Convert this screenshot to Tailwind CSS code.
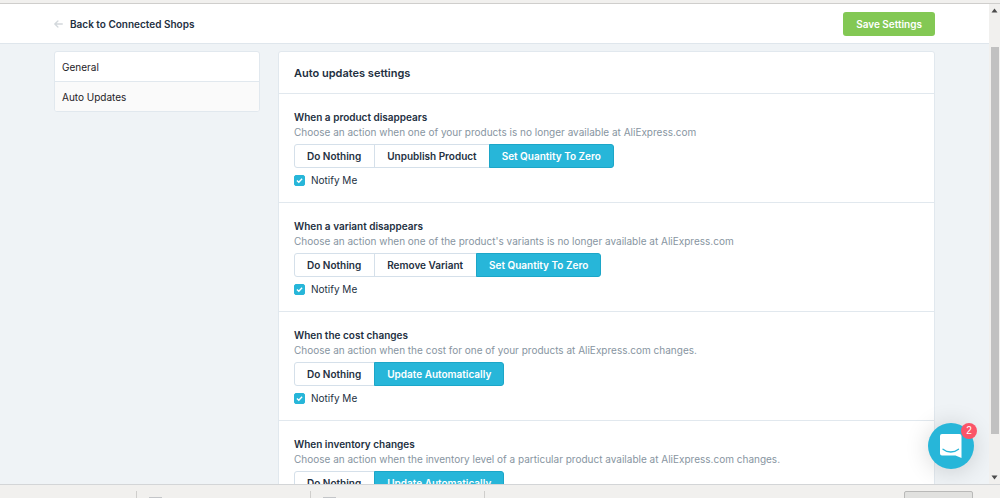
<!DOCTYPE html>
<html lang="en">
<head>
<meta charset="utf-8">
<meta name="viewport" content="width=device-width, initial-scale=1">
<title>Auto updates settings</title>
<script src="https://cdn.jsdelivr.net/npm/@tailwindcss/browser@4"></script>
</head>
<body class="flex h-screen flex-col overflow-hidden bg-[#f1f0ee] font-['Inter','Liberation_Sans',sans-serif] text-[10px] leading-[15px] text-[#23303f]">
  <div class="h-1 shrink-0 border-b border-[#cfcecc]"></div>
  <div class="flex min-h-0 flex-1 bg-[#eff3f6]">
    <div class="relative flex min-w-0 flex-1 flex-col overflow-hidden">
      <header class="h-10 shrink-0 border-b border-[#dfe6ec] bg-white">
        <div class="mx-auto flex h-full max-w-[881px] items-center justify-between">
          <a href="#" class="flex items-center gap-[7px] pt-px font-semibold">
            <svg class="h-2 w-[9px]" viewBox="0 0 9 8" fill="none" stroke="#d3d8dc" stroke-width="1.300" stroke-linecap="round" stroke-linejoin="round"><path d="M8.300 4H.9M3.900 1 .8 4l3.100 3"/></svg>
            Back to Connected Shops
          </a>
          <button type="button" class="h-6 rounded-[3px] bg-[#83c854] px-[13px] pt-px font-semibold text-white">Save Settings</button>
        </div>
      </header>
      <div class="mx-auto flex min-h-0 w-full max-w-[881px] flex-1 items-start gap-[18px] pt-[7px]">
        <nav class="w-[206px] shrink-0 overflow-hidden rounded-[3px] border border-[#e1e8ee] bg-white text-[#1d2126]">
          <a href="#" class="block border-b border-[#e1e8ee] px-[7px] pt-2 pb-[6px]">General</a>
          <a href="#" class="block bg-[#fafafa] px-[7px] pt-2 pb-[6px]">Auto Updates</a>
        </nav>
        <main class="min-w-0 flex-1 rounded-[3px] border border-[#e1e8ee] bg-white">
          <h1 class="border-b border-[#e1e8ee] px-[15px] pt-[13px] pb-[11px] text-[11px] leading-[17px] font-semibold">Auto updates settings</h1>

          <section class="border-b border-[#e1e8ee] px-[15px] pt-4 pb-[14px]">
            <h2 class="font-semibold">When a product disappears</h2>
            <p class="text-[#8795a1]">Choose an action when one of your products is no longer available at AliExpress.com</p>
            <div class="mt-1 flex h-6 font-semibold">
              <button type="button" class="rounded-l-[3px] border border-[#d5e0ea] pr-[13px] pl-3">Do Nothing</button>
              <button type="button" class="-ml-px border border-[#d5e0ea] px-3">Unpublish Product</button>
              <button type="button" class="-ml-px rounded-r-[3px] border border-[#1ca6c8] bg-[#27b6d9] px-3 text-white">Set Quantity To Zero</button>
            </div>
            <label class="mt-1 flex h-4 w-fit items-center gap-[6px]">
              <span class="grid h-[11px] w-[11px]">
                <input type="checkbox" checked class="col-start-1 row-start-1 h-[11px] w-[11px] appearance-none rounded-[2px] border border-[#c5d0da] checked:border-[#27b6d9] checked:bg-[#27b6d9]">
                <svg class="pointer-events-none col-start-1 row-start-1 h-[11px] w-[11px]" viewBox="0 0 11 11" fill="none" stroke="#fff" stroke-width="1.400"><path d="m2.900 5.400 1.900 1.800 3.300-3.400"/></svg>
              </span>
              Notify Me
            </label>
          </section>

          <section class="border-b border-[#e1e8ee] px-[15px] pt-4 pb-[14px]">
            <h2 class="font-semibold">When a variant disappears</h2>
            <p class="text-[#8795a1]">Choose an action when one of the product's variants is no longer available at AliExpress.com</p>
            <div class="mt-1 flex h-6 font-semibold">
              <button type="button" class="rounded-l-[3px] border border-[#d5e0ea] pr-[13px] pl-3">Do Nothing</button>
              <button type="button" class="-ml-px border border-[#d5e0ea] pr-[13px] pl-3">Remove Variant</button>
              <button type="button" class="-ml-px rounded-r-[3px] border border-[#1ca6c8] bg-[#27b6d9] px-3 text-white">Set Quantity To Zero</button>
            </div>
            <label class="mt-1 flex h-4 w-fit items-center gap-[6px]">
              <span class="grid h-[11px] w-[11px]">
                <input type="checkbox" checked class="col-start-1 row-start-1 h-[11px] w-[11px] appearance-none rounded-[2px] border border-[#c5d0da] checked:border-[#27b6d9] checked:bg-[#27b6d9]">
                <svg class="pointer-events-none col-start-1 row-start-1 h-[11px] w-[11px]" viewBox="0 0 11 11" fill="none" stroke="#fff" stroke-width="1.400"><path d="m2.900 5.400 1.900 1.800 3.300-3.400"/></svg>
              </span>
              Notify Me
            </label>
          </section>

          <section class="border-b border-[#e1e8ee] px-[15px] pt-4 pb-[14px]">
            <h2 class="font-semibold">When the cost changes</h2>
            <p class="text-[#8795a1]">Choose an action when the cost for one of your products at AliExpress.com changes.</p>
            <div class="mt-1 flex h-6 font-semibold">
              <button type="button" class="rounded-l-[3px] border border-[#d5e0ea] pr-[13px] pl-3">Do Nothing</button>
              <button type="button" class="-ml-px rounded-r-[3px] border border-[#1ca6c8] bg-[#27b6d9] px-3 text-white">Update Automatically</button>
            </div>
            <label class="mt-1 flex h-4 w-fit items-center gap-[6px]">
              <span class="grid h-[11px] w-[11px]">
                <input type="checkbox" checked class="col-start-1 row-start-1 h-[11px] w-[11px] appearance-none rounded-[2px] border border-[#c5d0da] checked:border-[#27b6d9] checked:bg-[#27b6d9]">
                <svg class="pointer-events-none col-start-1 row-start-1 h-[11px] w-[11px]" viewBox="0 0 11 11" fill="none" stroke="#fff" stroke-width="1.400"><path d="m2.900 5.400 1.900 1.800 3.300-3.400"/></svg>
              </span>
              Notify Me
            </label>
          </section>

          <section class="px-[15px] pt-4 pb-[14px]">
            <h2 class="font-semibold">When inventory changes</h2>
            <p class="text-[#8795a1]">Choose an action when the inventory level of a particular product available at AliExpress.com changes.</p>
            <div class="mt-1 flex h-6 font-semibold">
              <button type="button" class="rounded-l-[3px] border border-[#d5e0ea] pr-[13px] pl-3">Do Nothing</button>
              <button type="button" class="-ml-px rounded-r-[3px] border border-[#1ca6c8] bg-[#27b6d9] px-3 text-white">Update Automatically</button>
            </div>
          </section>
        </main>
      </div>

      <button type="button" aria-label="Open chat, 2 unread messages" class="absolute right-[15px] bottom-[15px] flex h-[46px] w-[46px] items-center justify-center rounded-full bg-[#27b6d9] shadow-[0_2px_24px_rgba(0,0,0,0.16)]">
        <svg class="h-[26px] w-[24px]" viewBox="0 0 24 26"><path d="M3 1h17.500a2 2 0 0 1 2 2v22l-6-2.500H3a2 2 0 0 1-2-2V3a2 2 0 0 1 2-2z" fill="#fff"/><path d="M4 16.200c4.400 3.700 11.100 3.700 15.500 0" fill="none" stroke="#27b6d9" stroke-width="1.300" stroke-linecap="round"/></svg>
        <span class="absolute top-0 -right-[3px] flex h-4 w-4 items-center justify-center rounded-full bg-[#fb5468] font-['Liberation_Sans'] text-[10px] leading-4 text-white">2</span>
      </button>
    </div>

    <div class="flex w-[11px] shrink-0 flex-col items-center bg-[#f1f0ee] pt-1 pb-1" aria-hidden="true">
      <svg class="h-[5px] w-[7px] shrink-0" viewBox="0 0 7 5"><path d="M3.500.5 6.500 4.500H.5z" fill="#4b4b4b"/></svg>
      <div class="mt-[34px] mb-[41px] w-2 flex-1 bg-[#c1c1c1]"></div>
      <svg class="h-[5px] w-[7px] shrink-0" viewBox="0 0 7 5"><path d="M3.500 4.500.5.500h6z" fill="#4b4b4b"/></svg>
    </div>
  </div>

  <footer class="flex h-[14px] shrink-0 items-start overflow-hidden border-t border-[#d3d5d7] pt-[6px] pr-[27px]">
    <div class="flex h-6 w-[137px] shrink-0 border-r border-[#cfcecc]"></div>
    <div class="flex h-6 w-[174px] shrink-0 border-r border-[#cfcecc] px-3 pt-[6px]"><span class="h-4 w-[13px] bg-[#c3c5c8]"></span></div>
    <div class="flex h-6 w-[174px] shrink-0 border-r border-[#cfcecc] px-3 pt-[6px]"><span class="h-4 w-[13px] bg-[#c3c5c8]"></span></div>
    <button type="button" class="ml-auto h-6 w-[69px] shrink-0 rounded-[2px] border border-[#b9b9b8] bg-[#e1e1df] text-[10px] text-[#444]">Show all</button>
  </footer>
</body>
</html>
